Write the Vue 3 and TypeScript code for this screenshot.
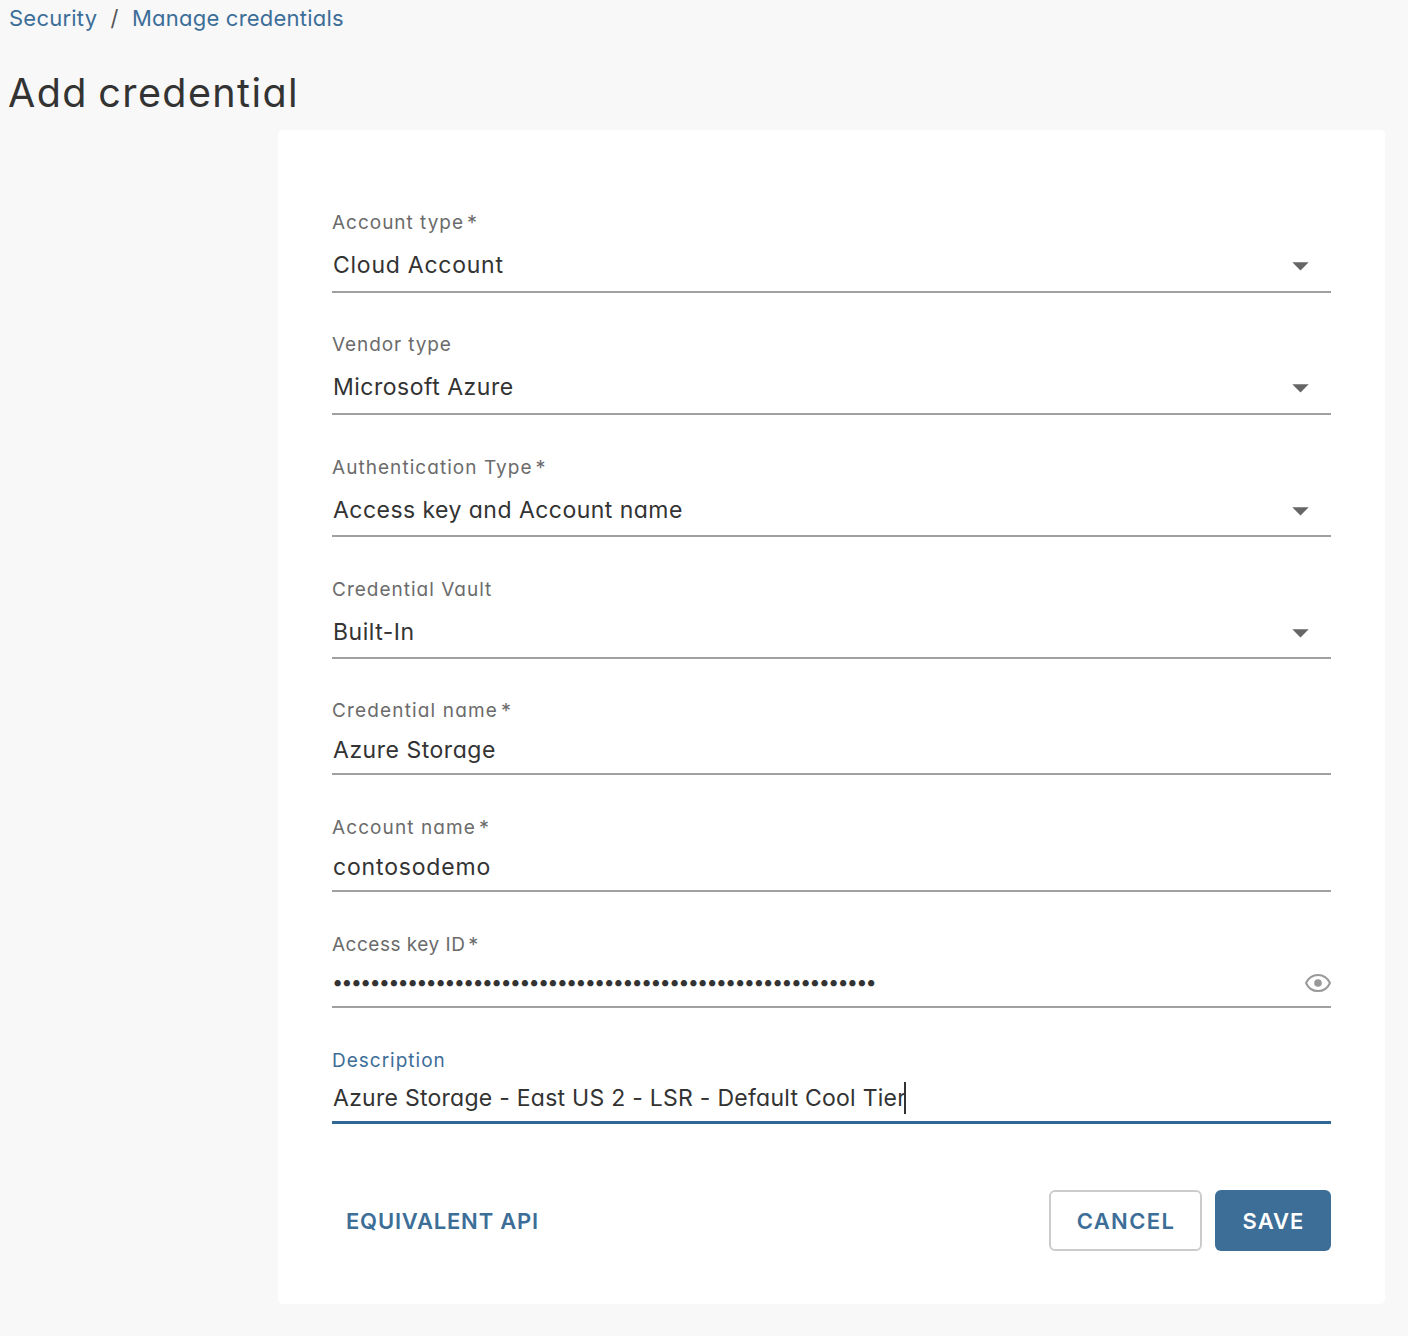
<script setup lang="ts">
interface Field {
  label: string
  value: string
  kind: 'select' | 'text' | 'password'
  required?: boolean
  focused?: boolean
  labelTracking: number
  valueTracking: number
}

const fields: Field[] = [
  { label: 'Account type', value: 'Cloud Account', kind: 'select', required: true, labelTracking: 0.98, valueTracking: 0.75 },
  { label: 'Vendor type', value: 'Microsoft Azure', kind: 'select', labelTracking: 0.9, valueTracking: 0.5 },
  { label: 'Authentication Type', value: 'Access key and Account name', kind: 'select', required: true, labelTracking: 1.05, valueTracking: 0.46 },
  { label: 'Credential Vault', value: 'Built-In', kind: 'select', labelTracking: 1, valueTracking: 0.5 },
  { label: 'Credential name', value: 'Azure Storage', kind: 'text', required: true, labelTracking: 1.15, valueTracking: 0.52 },
  { label: 'Account name', value: 'contosodemo', kind: 'text', required: true, labelTracking: 1.1, valueTracking: 0.83 },
  { label: 'Access key ID', value: '•'.repeat(58), kind: 'password', required: true, labelTracking: 0.5, valueTracking: -1.89 },
  { label: 'Description', value: 'Azure Storage - East US 2 - LSR - Default Cool Tier', kind: 'text', focused: true, labelTracking: 1, valueTracking: 0.26 },
]
</script>

<template>
  <main class="page">
    <nav class="crumbs">
      <a class="security">Security</a>
      <span class="sep">/</span>
      <a>Manage credentials</a>
    </nav>
    <h1>Add credential</h1>
    <form class="card" @submit.prevent>
      <div v-for="f in fields" :key="f.label" class="field" :class="[f.kind, { focused: f.focused }]">
        <label>
          <span :style="{ letterSpacing: f.labelTracking + 'px' }">{{ f.label }}</span>
          <span v-if="f.required" class="star">*</span>
        </label>
        <div class="control">
          <span class="value" :style="{ letterSpacing: f.valueTracking + 'px' }">{{ f.value }}</span>
          <i v-if="f.focused" class="caret"></i>
          <svg v-if="f.kind === 'select'" class="arrow" width="17" height="9" viewBox="0 0 17 9">
            <path d="M0.3 0.3H16.7L8.5 8.6Z" fill="#666" />
          </svg>
          <svg v-if="f.kind === 'password'" class="eye" width="28" height="20" viewBox="0 0 28 20" fill="none">
            <path d="M2 10C4.5 4.6 8.8 1.9 14 1.9S23.5 4.6 26 10C23.5 15.4 19.2 18.1 14 18.1S4.5 15.4 2 10Z" stroke="#999" stroke-width="2" stroke-linejoin="round" />
            <circle cx="14" cy="10" r="3.8" fill="#999" />
          </svg>
        </div>
      </div>
      <div class="actions">
        <button class="link">EQUIVALENT API</button>
        <button class="cancel">CANCEL</button>
        <button class="save">SAVE</button>
      </div>
    </form>
  </main>
</template>

<style>
body {
  background: #f8f8f8;
}
</style>

<style scoped>
.page {
  box-sizing: border-box;
  height: 1336px;
  padding: 2px 23px 0 9px;
  overflow: hidden;
  background: #f8f8f8;
  color: #333;
  font-family: Inter, 'Open Sans', sans-serif;
  font-feature-settings: 'cv11';
}
.crumbs {
  display: flex;
  height: 32px;
  line-height: 32px;
  font-size: 22px;
  letter-spacing: 0.22px;
  color: #3c6e98;
}
.security {
  width: 101.5px;
}
.sep {
  width: 21.5px;
  color: #555;
}
h1 {
  margin: 34px 0 0 -1px;
  height: 62px;
  line-height: 50px;
  font-size: 39.5px;
  font-weight: 400;
  letter-spacing: 1.4px;
  word-spacing: -2px;
}
.card {
  box-sizing: border-box;
  height: 1174px;
  margin-left: 269px;
  padding: 40px 54px 0;
  background: #fff;
  border-radius: 5px;
}
.field {
  box-sizing: border-box;
  display: flex;
  flex-direction: column;
  justify-content: flex-end;
  height: 116.2px;
  border-bottom: 2px solid #a0a0a0;
}
.field.select {
  height: 122.3px;
}
.field:nth-child(1) {
  height: 122.6px;
}
.field:nth-child(5) {
  height: 115.2px;
}
.field:nth-child(6) {
  height: 117px;
}
label {
  display: flex;
  gap: 3px;
  height: 24px;
  line-height: 24px;
  font-size: 19px;
  color: #6b6b6b;
}
.star {
  font-size: 20px;
}
.control {
  display: flex;
  align-items: center;
  height: 30px;
  margin: 12px 0 8px;
  line-height: 30px;
  font-size: 23px;
}
.value {
  margin-left: 1px;
}
.select .control {
  margin: 15px 0 10.6px;
}
.password .control {
  margin-top: 11px;
}
.password .value {
  margin-left: 0;
  font-size: 20px;
  position: relative;
  top: -1px;
}
.arrow {
  margin: 3px 22.5px 0 auto;
}
.eye {
  margin: 0 -1px 0 auto;
}
.field.focused {
  border-bottom: 3px solid #2f6896;
}
.focused label {
  color: #3c6e98;
}
.focused .control {
  margin: 10px 0 8px;
}
.caret {
  width: 2px;
  height: 32px;
  margin-left: -2px;
  background: #333;
}
.actions {
  display: flex;
  margin-top: 66px;
}
button {
  box-sizing: border-box;
  height: 61px;
  padding: 0;
  border: 0;
  border-radius: 6px;
  background: none;
  color: #3c6e98;
  font: 600 22px Inter, 'Open Sans', sans-serif;
}
.link {
  margin-right: auto;
  padding-left: 14px;
  letter-spacing: 0.8px;
}
.cancel {
  width: 153px;
  margin-right: 13px;
  border: 2px solid #ccc;
  letter-spacing: 1.4px;
  text-indent: 1px;
}
.save {
  width: 116px;
  background: #3c6e98;
  color: #fff;
  letter-spacing: 1px;
  text-indent: 1px;
}
</style>
